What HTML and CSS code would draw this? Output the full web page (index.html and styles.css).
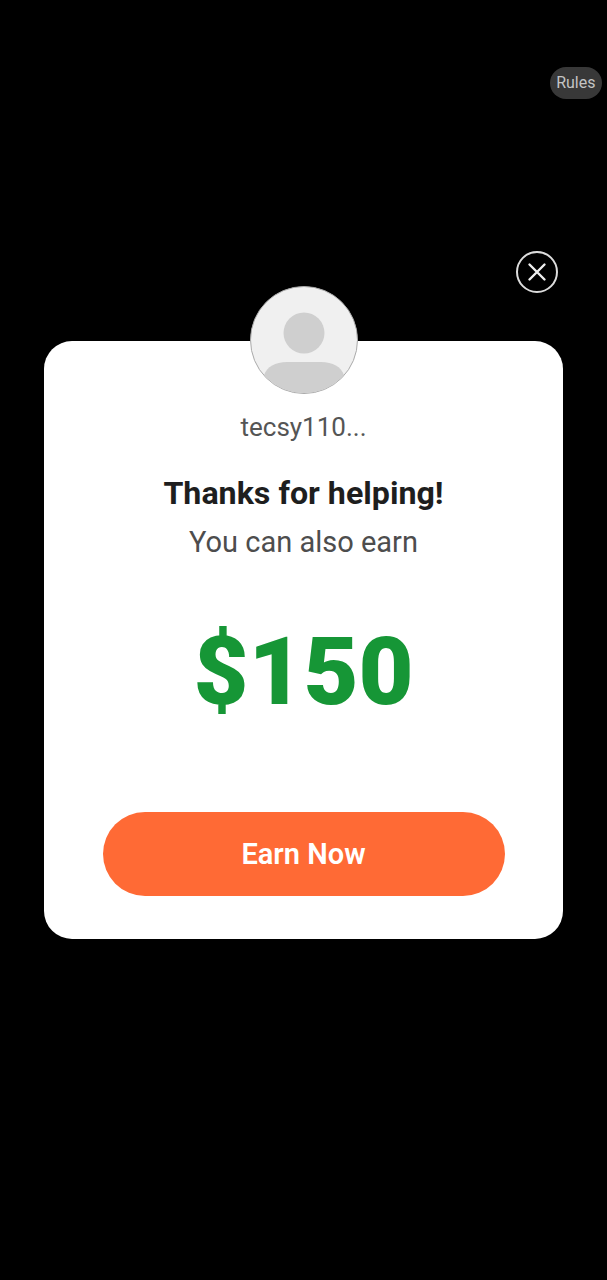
FILE: index.html
```html
<!DOCTYPE html>
<html lang="en">
<head>
  <meta charset="UTF-8">
  <title>Earn Popup</title>
  <link rel="stylesheet" href="styles.css">
</head>
<body>
  <div class="top-bar">
    <div class="rules">Rules</div>
  </div>

  <div class="close-row">
    <div class="close-btn">
      <svg viewBox="0 0 20 20" width="20" height="20">
        <path d="M2.5 2.5L17.5 17.5M17.5 2.5L2.5 17.5" stroke="#eee" stroke-width="2.4" stroke-linecap="round" fill="none"/>
      </svg>
    </div>
  </div>

  <div class="card">
    <div class="avatar">
      <svg viewBox="0 0 106 106" width="106" height="106">
        <circle cx="53" cy="46" r="20.5" fill="#cfcfcf"/>
        <path d="M13 88C16 80 24 75 36 75H70C82 75 90 80 93 88V106H13Z" fill="#cfcfcf"/>
      </svg>
    </div>
    <div class="username">tecsy110...</div>
    <h1>Thanks for helping!</h1>
    <div class="subtitle">You can also earn</div>
    <div class="amount">$150</div>
    <button class="earn-btn">Earn Now</button>
  </div>
</body>
</html>
```
FILE: styles.css
```css
body {
  font-family: Roboto, sans-serif;
  margin: 0;
  padding: 0;
  height: 1280px;
  background-color: #000;
  overflow: hidden;
}

.top-bar {
  display: flex;
  justify-content: flex-end;
  padding: 67px 5px 0 0;
}

.rules {
  background-color: #383838;
  color: #c4c4c4;
  font-size: 16px;
  line-height: 32px;
  padding: 0 6.5px;
  border-radius: 16px;
}

.close-row {
  display: flex;
  justify-content: flex-end;
  padding: 152px 49px 0 0;
}

.close-btn {
  width: 38px;
  height: 38px;
  border: 2px solid #dcdcdc;
  border-radius: 50%;
  display: flex;
  justify-content: center;
  align-items: center;
}

.card {
  background-color: #fff;
  width: 519px;
  height: 598px;
  margin: 48px 0 0 44px;
  border-radius: 28px;
  display: flex;
  flex-direction: column;
  align-items: center;
  box-sizing: border-box;
}

.avatar {
  width: 106px;
  height: 106px;
  margin-top: -55px;
  border: 1px solid #aaa;
  border-radius: 50%;
  background-color: #f0f0f0;
  overflow: hidden;
}

.avatar svg {
  display: block;
}

.username {
  margin-top: 17px;
  font-size: 26px;
  line-height: 32px;
  color: #555;
}

h1 {
  margin: 30px 0 0;
  font-size: 32.2px;
  line-height: 40px;
  font-weight: 700;
  color: #1e1e1e;
}

.subtitle {
  margin-top: 9px;
  font-size: 29px;
  line-height: 40px;
  color: #4d4d4d;
}

.amount {
  margin-top: 56px;
  font-size: 95px;
  line-height: 108px;
  font-weight: 900;
  color: #169636;
}

.earn-btn {
  margin-top: 86px;
  width: 402px;
  height: 84px;
  border: 0;
  border-radius: 42px;
  background-color: #ff6a35;
  color: #fff;
  font-family: Roboto, sans-serif;
  font-size: 29px;
  font-weight: 600;
}
```
